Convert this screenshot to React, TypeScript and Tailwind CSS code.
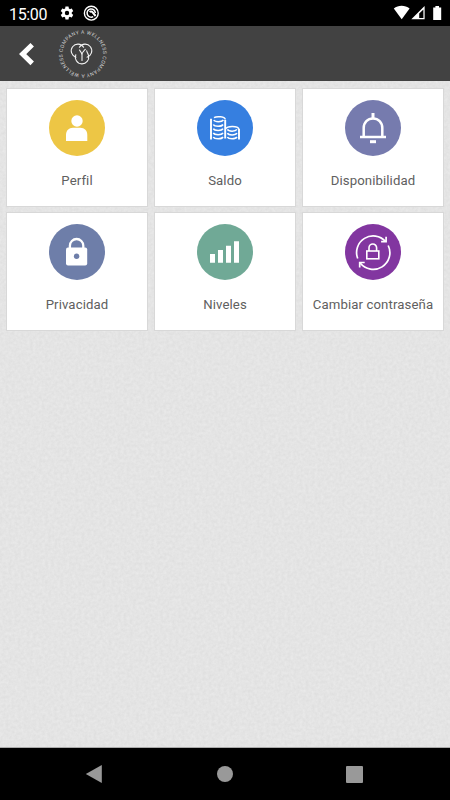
import type { ReactNode } from "react";

function StatusBar() {
  return (
    <div className="flex h-[26px] shrink-0 items-center bg-black pl-[9px] pr-[8px] text-white">
      <span className="w-[39px] whitespace-nowrap text-[16px] leading-[26px] tracking-[-0.35px] pt-[3px]">15:00</span>
      <svg className="ml-[11px]" width="16" height="16" viewBox="0 0 24 24" fill="currentColor">
        <path d="M19.14 12.94c.04-.3.06-.61.06-.94 0-.32-.02-.64-.07-.94l2.03-1.58a.49.49 0 0 0 .12-.61l-1.92-3.32a.488.488 0 0 0-.59-.22l-2.39.96c-.5-.38-1.03-.7-1.62-.94l-.36-2.54a.484.484 0 0 0-.48-.41h-3.84c-.24 0-.43.17-.47.41l-.36 2.54c-.59.24-1.13.57-1.62.94l-2.39-.96c-.22-.08-.47 0-.59.22L2.74 8.87c-.12.21-.08.47.12.61l2.03 1.58c-.05.3-.09.63-.09.94s.02.64.07.94l-2.03 1.58a.49.49 0 0 0-.12.61l1.92 3.32c.12.22.37.29.59.22l2.39-.96c.5.38 1.03.7 1.62.94l.36 2.54c.05.24.24.41.48.41h3.84c.24 0 .44-.17.47-.41l.36-2.54c.59-.24 1.13-.56 1.62-.94l2.39.96c.22.08.47 0 .59-.22l1.92-3.32c.12-.22.07-.47-.12-.61l-2.01-1.58zM12 15.3a3.3 3.3 0 1 1 0-6.6 3.3 3.3 0 0 1 0 6.6z" />
      </svg>
      <svg className="ml-[8px]" width="16" height="16" viewBox="0 0 16 16" fill="none" stroke="currentColor">
        <circle cx="8.3" cy="8.2" r="6.9" strokeWidth="1.4" />
        <path d="M10.2 11.6A4.1 4.1 0 1 1 12.3 8" strokeWidth="1.5" />
        <path d="M6.6 6.9a2 2 0 0 1 2.9.3L12.6 11" strokeWidth="2" />
      </svg>
      <svg className="ml-auto" width="49" height="16" viewBox="0 0 49 16" fill="currentColor">
        <path d="M.8 3.5C5.2-.1 12-.1 16.6 3.5L8.7 14.2z" />
        <path d="M31.6 1v13.2H18.3z" />
        <path d="M30.4 4.4v8.6h-4.2V8.6z" fill="#000" />
        <path d="M40.2 2.4h2.2V.9h3.6v1.5h2.2v12.6h-8z" />
      </svg>
    </div>
  );
}

function Header() {
  return (
    <header className="flex h-[55px] shrink-0 items-center bg-[#424242]">
      <svg className="ml-[18px]" width="18" height="24" viewBox="0 0 18 24" fill="none" stroke="#fff" strokeWidth="5">
        <path d="M14.2 2.8 4.6 12.1l9.6 9.3" />
      </svg>
      <svg className="ml-[20px]" width="54" height="54" viewBox="0 0 54 54" fill="none">
        <defs>
          <path id="ring" d="M26.8 47.3a20.3 20.3 0 0 1 0-40.6 20.3 20.3 0 0 1 0 40.6" />
        </defs>
        <g transform="rotate(-5 26.8 27)">
          <text fill="#d5d5d5" fontSize="5" textLength="125" lengthAdjust="spacing">
            <textPath href="#ring" startOffset="0">
              A WELLNESS COMPANY A WELLNESS COMPANY
            </textPath>
          </text>
        </g>
        <g stroke="#f2f2f2" strokeWidth="1.1" strokeLinecap="round">
          <path d="M27.6 20.2A6.7 6.7 0 1 0 20 30.2" />
          <path d="M23.4 20.2A6.7 6.7 0 1 1 31 30.2" />
          <path d="M19.8 27.7A6.7 6.7 0 1 0 32.5 28.5c-.3-1.8-1.6-2.8-1.8-4.8" />
          <path d="M26 33.5v-5.6c0-1.8-.9-2.9-2.5-4.9M29.3 22.4c-2 2-3.3 3-3.3 5.5" />
        </g>
      </svg>
    </header>
  );
}

function Glyph({ children }: { children: ReactNode }) {
  return (
    <svg width="56" height="56" viewBox="0 0 56 56" fill="none" stroke="#fff">
      {children}
    </svg>
  );
}

const tiles = [
  {
    label: "Perfil",
    color: "bg-[#edc645]",
    icon: (
      <g fill="#fff" stroke="none">
        <circle cx="28" cy="21" r="5.7" />
        <path d="M17 41v-6c0-4.3 2.8-7.2 7-7.2h7.3c4.2 0 7 2.9 7 7.2v6z" />
      </g>
    ),
  },
  {
    label: "Saldo",
    color: "bg-[#367fe0]",
    icon: (
      <g strokeWidth="1.5">
        <path d="M14 18.8v20.8M28.2 20v18.6M42 29v10.6" strokeWidth="1.9" />
        <path d="M17 17.6c3-1.7 11.2-1 11.2 2" />
        <path d="M16.8 20c1.3 2.3 8 2.3 9.6 0" />
        <path d="M16.3 24.5c1.3 2.4 8.3 2.4 9.7 0M16.3 28.7c1.3 2.4 8.3 2.4 9.7 0M16.3 32.9c1.3 2.4 8.3 2.4 9.7 0M16.3 37c1.3 2.4 8.3 2.4 9.7 0" />
        <path d="M29 28.6c1.3-3 11.7-3 13 .4" />
        <path d="M30.4 29.4c1.3 2.3 8 2.3 9.6 0M30.4 33.2c1.3 2.4 8 2.4 9.6 0M30.4 37c1.3 2.4 8 2.4 9.6 0" />
      </g>
    ),
  },
  {
    label: "Disponibilidad",
    color: "bg-[#767bae]",
    icon: (
      <g>
        <path d="M18.7 37V28c0-5.6 4-9.6 9.3-9.6s9.3 4 9.3 9.6v9" strokeWidth="2.5" />
        <path d="M15 37h26" strokeWidth="2.5" />
        <path d="M28 13v5" strokeWidth="3" />
        <path d="M25 41.7h6" strokeWidth="3" />
      </g>
    ),
  },
  {
    label: "Privacidad",
    color: "bg-[#6e7ea9]",
    icon: (
      <g>
        <path d="M20.9 25v-3.3a6.7 6.7 0 0 1 13.4 0V25" strokeWidth="2.3" />
        <rect x="17" y="23.5" width="21.2" height="18" rx="2" fill="#fff" stroke="none" />
        <circle cx="27.6" cy="32.2" r="2.7" fill="#6e7ea9" stroke="none" />
      </g>
    ),
  },
  {
    label: "Niveles",
    color: "bg-[#70a996]",
    icon: (
      <path d="M13 30h5v8.7h-5zM21 26h5v12.7h-5zM29 21.8h5v16.9h-5zM37 17.2h5v21.5h-5z" fill="#fff" stroke="none" />
    ),
  },
  {
    label: "Cambiar contraseña",
    color: "bg-[#8236a0]",
    icon: (
      <g strokeWidth="1.7">
        <path d="M12.7 34.5A16.6 16.6 0 0 1 40.5 17.4" />
        <path d="M41.1 12.7v5h-5" />
        <path d="M43.2 21.5a16.6 16.6 0 0 1-28 17.5" />
        <path d="M14.7 43.5v-5h5" />
        <rect x="21.8" y="27" width="12" height="7.8" strokeWidth="1.6" />
        <path d="M24 27v-3.2a3.8 3.8 0 0 1 7.6 0V27" strokeWidth="1.6" />
      </g>
    ),
  },
];

function NavBar() {
  return (
    <nav className="grid h-[52px] shrink-0 grid-cols-[1fr_16px_1fr] items-center bg-black">
      <svg className="ml-[85px]" width="18" height="18" viewBox="0 0 18 18" fill="#999">
        <path d="M.8 9 16.8 0v18z" />
      </svg>
      <span className="size-4 rounded-full bg-[#999]" />
      <span className="ml-[113px] size-[17px] rounded-[1px] bg-[#999]" />
    </nav>
  );
}

export default function App() {
  return (
    <div className="flex h-[800px] w-[450px] flex-col overflow-hidden font-['Roboto',sans-serif]">
      <StatusBar />
      <Header />
      <main className="relative flex-1 border-b border-[#aaa] bg-[#e4e4e4] px-[6px] pt-[7px]">
        <svg className="absolute inset-0 size-full" aria-hidden="true">
          <filter id="paper" x="0" y="0" width="100%" height="100%" colorInterpolationFilters="sRGB">
            <feTurbulence type="fractalNoise" baseFrequency="0.33" numOctaves="3" seed="4" />
            <feColorMatrix values="0.055 0 0 0 0.867  0.055 0 0 0 0.867  0.055 0 0 0 0.867  0 0 0 0 1" />
          </filter>
          <rect width="100%" height="100%" filter="url(#paper)" />
        </svg>
        <div className="relative grid grid-cols-3 gap-x-[6px] gap-y-[5px]">
          {tiles.map((tile) => (
            <div key={tile.label} className="flex h-[119px] flex-col items-center border border-[#d8d8d8] bg-white pt-[11px]">
              <div className={`size-14 rounded-full ${tile.color}`}>
                <Glyph>{tile.icon}</Glyph>
              </div>
              <span className="mt-[15px] whitespace-nowrap text-[13.2px] leading-5 tracking-[0.1px] text-[#606060]">
                {tile.label}
              </span>
            </div>
          ))}
        </div>
      </main>
      <NavBar />
    </div>
  );
}
